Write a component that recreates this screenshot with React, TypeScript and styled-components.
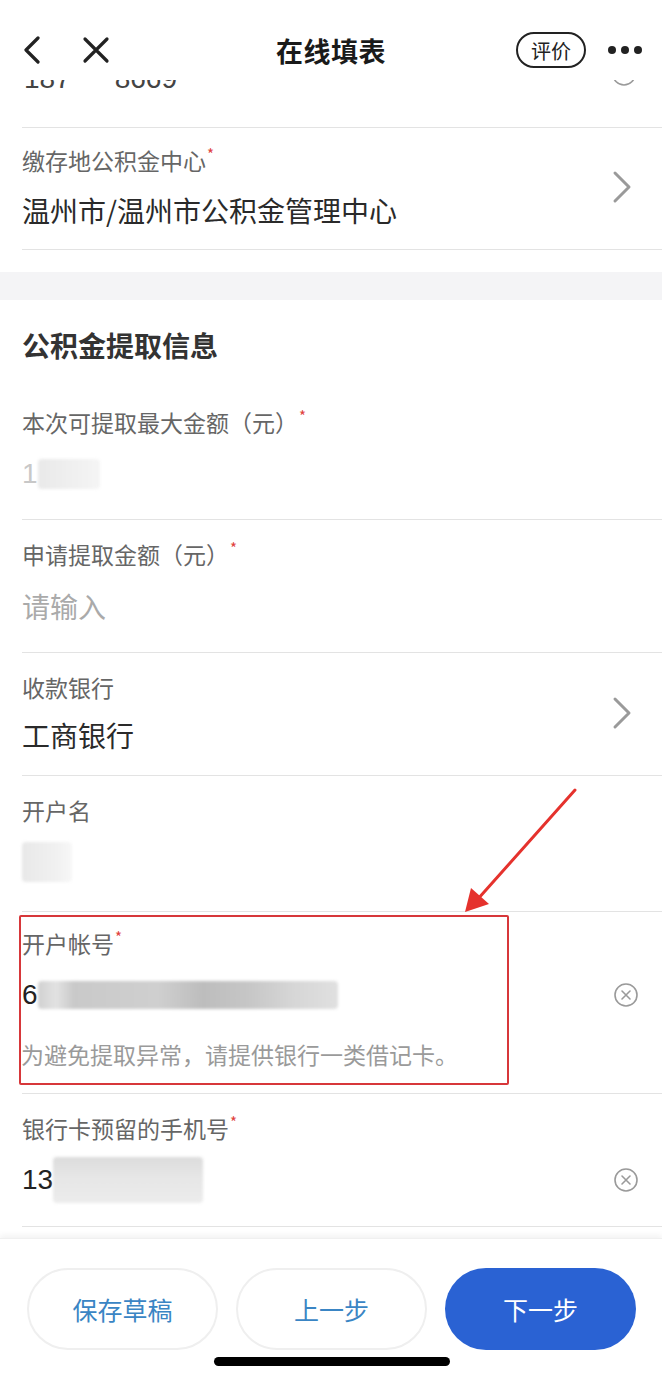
import React from "react";
import styled, { createGlobalStyle } from "styled-components";

const GlobalStyle = createGlobalStyle`
  html, body { margin: 0; padding: 0; background: #fff; }
  body { font-family: "Noto Sans CJK SC", "Noto Sans", sans-serif; overflow: hidden; }
  * { box-sizing: border-box; }
`;

const Page = styled.div`
  position: relative;
  width: 662px;
  height: 1377px;
  display: flex;
  flex-direction: column;
  background: #fff;
  overflow: hidden;
`;

const Header = styled.div`
  height: 80px;
  padding: 26px 22px 6px 22px;
  display: grid;
  grid-template-columns: 1fr auto 1fr;
  align-items: center;
  background: #fff;
`;

const HeaderLeft = styled.div`
  display: flex;
  align-items: center;
  gap: 40px;
`;

const HeaderRight = styled.div`
  display: flex;
  align-items: center;
  justify-content: flex-end;
  gap: 22px;
`;

const Title = styled.div`
  font-size: 27px;
  font-weight: 700;
  color: #1a1a1a;
  letter-spacing: 0.5px;
`;

const RatePill = styled.div`
  width: 70px;
  height: 36px;
  border: 2px solid #222;
  border-radius: 18px;
  display: flex;
  align-items: center;
  justify-content: center;
  font-size: 20px;
  color: #222;
`;

const Dots = styled.div`
  display: flex;
  gap: 5px;
  margin-right: -2px;
  span {
    width: 8px;
    height: 8px;
    border-radius: 50%;
    background: #222;
  }
`;

const ClipRow = styled.div`
  height: 48px;
  margin-left: 22px;
  border-bottom: 1px solid #e3e3e3;
  display: flex;
  justify-content: space-between;
  padding-right: 25px;
`;

const ClipWindow = styled.div`
  height: 13px;
  overflow: hidden;
  display: flex;
  gap: 42px;
`;

const ClipText = styled.div`
  margin-top: -21px;
  font-family: "Liberation Sans", "Noto Sans", sans-serif;
  font-size: 28px;
  line-height: 40px;
  color: #444;
  padding-left: 2px;
`;

const ClipIcon = styled.div`
  margin-top: -19px;
`;

const Row = styled.div<{ $top: number; $bottom: number }>`
  position: relative;
  margin-left: 22px;
  padding: ${(p) => p.$top}px 29px ${(p) => p.$bottom}px 0;
  border-bottom: 1px solid #e3e3e3;
  display: flex;
  align-items: center;
  justify-content: space-between;
`;

const RowMain = styled.div<{ $gap: number }>`
  flex: 1;
  display: flex;
  flex-direction: column;
  gap: ${(p) => p.$gap}px;
`;

const Label = styled.div`
  font-size: 23px;
  line-height: 32px;
  color: #666;
`;

const Star = styled.span`
  color: #e0413c;
  font-size: 15px;
  vertical-align: top;
  line-height: 20px;
  margin-left: 1px;
`;

const Value = styled.div<{ $muted?: boolean }>`
  height: 40px;
  font-size: 28px;
  line-height: 40px;
  color: ${(p) => (p.$muted ? "#aaa" : "#2a2a2a")};
  display: flex;
  align-items: center;
  justify-content: space-between;
`;

const ValueGroup = styled.span`
  display: flex;
  align-items: center;
`;

const Digits = styled.span<{ $light?: boolean }>`
  font-family: "Liberation Sans", "Noto Sans", sans-serif;
  font-size: 28px;
  color: ${(p) => (p.$light ? "#c8c8c8" : "#222")};
`;

const Blur = styled.span<{ $w: number; $h: number; $tone: string }>`
  display: inline-block;
  width: ${(p) => p.$w}px;
  height: ${(p) => p.$h}px;
  background: ${(p) => p.$tone};
  filter: blur(1.5px);
  border-radius: 4px;
`;

const Hint = styled.div`
  font-size: 23px;
  line-height: 32px;
  color: #9a9a9a;
  margin-top: 7px;
  margin-left: -1px;
`;

const ClearWrap = styled.span`
  display: flex;
  margin-right: -6px;
`;

const Spacer = styled.div`
  height: 22px;
`;

const Band = styled.div`
  height: 28px;
  background: #f4f4f6;
`;

const SectionTitle = styled.div`
  padding: 25px 22px 23px;
  font-size: 28px;
  line-height: 40px;
  font-weight: 600;
  color: #333;
`;

const Annot = styled.div`
  position: absolute;
  left: -3px;
  top: 3px;
  width: 490px;
  height: 170px;
  border: 2px solid #d7373a;
  border-radius: 2px;
  pointer-events: none;
`;

const Arrow = styled.svg`
  position: absolute;
  left: 455px;
  top: 780px;
  pointer-events: none;
`;

const Footer = styled.div`
  margin-top: auto;
  height: 139px;
  background: #fff;
  box-shadow: 0 -3px 6px rgba(0, 0, 0, 0.05);
  border-top: 1px solid #f0f0f0;
  padding: 29px 26px 0 27px;
  display: flex;
  flex-direction: column;
  align-items: center;
  gap: 7px;
`;

const ButtonBar = styled.div`
  width: 100%;
  display: grid;
  grid-template-columns: repeat(3, 1fr);
  gap: 18px;
`;

const Btn = styled.div<{ $primary?: boolean }>`
  height: 82px;
  border-radius: 41px;
  display: flex;
  align-items: center;
  justify-content: center;
  font-size: 25px;
  color: ${(p) => (p.$primary ? "#fff" : "#3a85c4")};
  background: ${(p) => (p.$primary ? "#2a62d3" : "#fff")};
  border: ${(p) => (p.$primary ? "none" : "2px solid #efefef")};
`;

const HomeBar = styled.div`
  width: 236px;
  height: 9px;
  border-radius: 5px;
  background: #000;
`;

const Chevron = () => (
  <svg width="22" height="34" viewBox="0 0 22 34">
    <path d="M4 3 L18 17 L4 31" fill="none" stroke="#9a9a9a" strokeWidth="3" strokeLinecap="round" strokeLinejoin="round" />
  </svg>
);

const ClearIcon = () => (
  <svg width="26" height="26" viewBox="0 0 26 26">
    <circle cx="13" cy="13" r="11" fill="none" stroke="#9a9a9a" strokeWidth="1.6" />
    <path d="M9 9 L17 17 M17 9 L9 17" stroke="#9a9a9a" strokeWidth="1.6" strokeLinecap="round" />
  </svg>
);

const Req = () => <Star>*</Star>;

export default function App() {
  return (
    <>
      <GlobalStyle />
      <Page>
        <Header>
          <HeaderLeft>
            <svg width="20" height="28" viewBox="0 0 20 28">
              <path d="M16 2 L4 14 L16 26" fill="none" stroke="#222" strokeWidth="3.2" strokeLinecap="round" strokeLinejoin="round" />
            </svg>
            <svg width="28" height="28" viewBox="0 0 28 28">
              <path d="M3 3 L25 25 M25 3 L3 25" fill="none" stroke="#222" strokeWidth="3.2" strokeLinecap="round" />
            </svg>
          </HeaderLeft>
          <Title>在线填表</Title>
          <HeaderRight>
            <RatePill>评价</RatePill>
            <Dots>
              <span />
              <span />
              <span />
            </Dots>
          </HeaderRight>
        </Header>

        <ClipRow>
          <ClipWindow>
            <ClipText>187</ClipText>
            <ClipText>8669</ClipText>
          </ClipWindow>
          <ClipWindow>
            <ClipIcon>
              <ClearIcon />
            </ClipIcon>
          </ClipWindow>
        </ClipRow>

        <Row $top={16} $bottom={19}>
          <RowMain $gap={14}>
            <Label>
              缴存地公积金中心<Req />
            </Label>
            <Value>温州市/温州市公积金管理中心</Value>
          </RowMain>
          <Chevron />
        </Row>

        <Spacer />
        <Band />
        <SectionTitle>公积金提取信息</SectionTitle>

        <Row $top={18} $bottom={25}>
          <RowMain $gap={16}>
            <Label>
              本次可提取最大金额（元）<Req />
            </Label>
            <Value>
              <ValueGroup>
                <Digits $light>1</Digits>
                <Blur $w={62} $h={30} $tone="linear-gradient(90deg,#e9e9e9,#f0f0f0 60%,#f5f5f5)" />
              </ValueGroup>
            </Value>
          </RowMain>
        </Row>

        <Row $top={18} $bottom={26}>
          <RowMain $gap={16}>
            <Label>
              申请提取金额（元）<Req />
            </Label>
            <Value $muted>请输入</Value>
          </RowMain>
        </Row>

        <Row $top={18} $bottom={20}>
          <RowMain $gap={12}>
            <Label>收款银行</Label>
            <Value>工商银行</Value>
          </RowMain>
          <Chevron />
        </Row>

        <Row $top={18} $bottom={29}>
          <RowMain $gap={16}>
            <Label>开户名</Label>
            <Value>
              <ValueGroup>
                <Blur $w={50} $h={40} $tone="linear-gradient(90deg,#e8e8e8,#f1f1f1 70%,#f7f7f7)" />
              </ValueGroup>
            </Value>
          </RowMain>
        </Row>

        <Row $top={15} $bottom={23}>
          <RowMain $gap={16}>
            <Label>
              开户帐号<Req />
            </Label>
            <Value>
              <ValueGroup>
                <Digits>6</Digits>
                <Blur
                  $w={300}
                  $h={28}
                  $tone="linear-gradient(90deg,#d0d0d0 0%,#e2e2e2 6%,#c9c9c9 12%,#cfcfcf 40%,#bdbdbd 55%,#c6c6c6 70%,#d6d6d6 85%,#e0e0e0 100%)"
                />
              </ValueGroup>
              <ClearWrap>
                <ClearIcon />
              </ClearWrap>
            </Value>
            <Hint>为避免提取异常，请提供银行一类借记卡。</Hint>
          </RowMain>
          <Annot />
        </Row>

        <Row $top={18} $bottom={26}>
          <RowMain $gap={16}>
            <Label>
              银行卡预留的手机号<Req />
            </Label>
            <Value>
              <ValueGroup>
                <Digits>13</Digits>
                <Blur $w={150} $h={46} $tone="linear-gradient(180deg,#dcdcdc,#e6e6e6 45%,#ececec)" />
              </ValueGroup>
              <ClearWrap>
                <ClearIcon />
              </ClearWrap>
            </Value>
          </RowMain>
        </Row>

        <Footer>
          <ButtonBar>
            <Btn>保存草稿</Btn>
            <Btn>上一步</Btn>
            <Btn $primary>下一步</Btn>
          </ButtonBar>
          <HomeBar />
        </Footer>

        <Arrow width="130" height="140" viewBox="0 0 130 140">
          <line x1="120" y1="10" x2="22" y2="120" stroke="#e5322d" strokeWidth="3" strokeLinecap="round" />
          <polygon points="10,132 16,108 34,124" fill="#e5322d" />
        </Arrow>
      </Page>
    </>
  );
}
